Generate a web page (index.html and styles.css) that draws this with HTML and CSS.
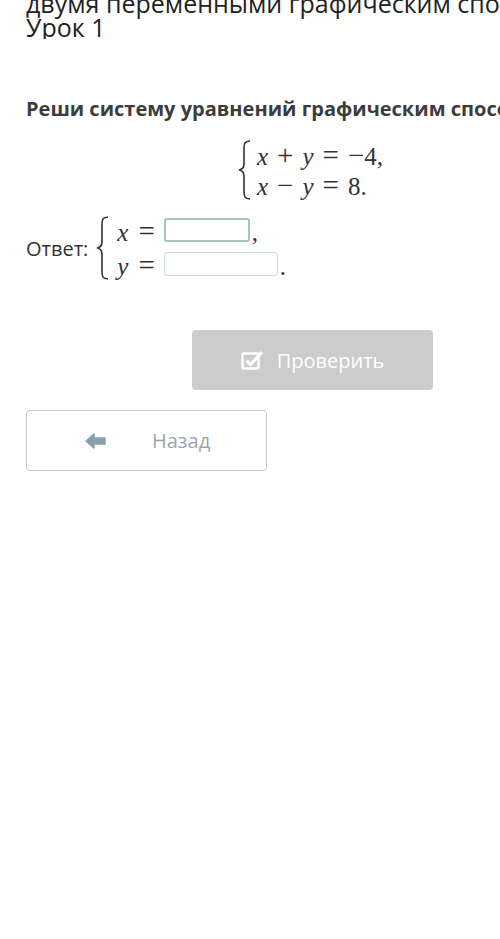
FILE: index.html
```html
<!DOCTYPE html>
<html lang="ru">
<head>
  <meta charset="UTF-8" />
  <meta name="viewport" content="width=device-width, initial-scale=1" />
  <title>Урок 1</title>
  <link rel="stylesheet" href="styles.css">
</head>
<body>

<header class="lesson-head">
  <h1>двумя переменными графическим способом.<br>Урок 1</h1>
</header>

<div class="task">
  <h2>Реши систему уравнений графическим способом:</h2>

  <div class="system">
    <svg class="brace" width="13" height="60" viewBox="0 0 13 60">
      <path d="M12 1 C7 1.5 6 3 6 8 L6 24 C6 28 4 29.5 1 30 C4 30.5 6 32 6 36 L6 52 C6 57 7 58.5 12 59" fill="none" stroke="#333" stroke-width="1.6"/>
    </svg>
    <div class="rows">
      <div class="eq"><i>x</i><span class="op">+</span><i>y</i><span class="op">=</span><span class="neg">−</span>4,</div>
      <div class="eq"><i>x</i><span class="op">−</span><i>y</i><span class="op">=</span>8.</div>
    </div>
  </div>

  <div class="answer">
    <span class="answer-label">Ответ:</span>
    <svg class="brace" width="13" height="64" viewBox="0 0 13 64">
      <path d="M12 1 C7 1.5 6 3 6 8 L6 26 C6 30 4 31.5 1 32 C4 32.5 6 34 6 38 L6 56 C6 61 7 62.5 12 63" fill="none" stroke="#333" stroke-width="1.6"/>
    </svg>
    <div class="rows">
      <div class="eq"><i>x</i><span class="op">=</span><input type="text" class="box box-x"><span class="punct">,</span></div>
      <div class="eq"><i>y</i><span class="op">=</span><input type="text" class="box box-y"><span class="punct">.</span></div>
    </div>
  </div>

  <div class="actions">
    <button type="button" class="btn-check" disabled>
      <svg width="24" height="22" viewBox="0 0 24 22">
        <rect x="1.5" y="4.5" width="16" height="15" rx="1.5" fill="none" stroke="#fff" stroke-width="2.5"/>
        <path d="M5.5 11.5 L9.5 15.5 L21 3" fill="none" stroke="#fff" stroke-width="3.2"/>
      </svg>
      Проверить
    </button>
  </div>

  <button type="button" class="btn-back">
    <svg width="22" height="16" viewBox="0 0 22 16">
      <path d="M1 8 L9 1 L9 5 L20 5 L20 11 L9 11 L9 15 Z" fill="#8aa0ad" stroke="#8aa0ad" stroke-width="1.5" stroke-linejoin="round"/>
    </svg>
    <span>Назад</span>
  </button>
</div>

</body>
</html>
```

FILE: styles.css
```css
body {
  font-family: "Open Sans", Arial, sans-serif;
  background-color: #fff;
  color: #333;
  margin: 0; padding: 0;
  overflow: hidden;
}
.lesson-head {
  padding: 0 26px;
  overflow: hidden;
}
.lesson-head h1 {
  margin: -9px 0 0;
  font-size: 25px;
  line-height: 24px;
  font-weight: normal;
  color: #222;
  white-space: nowrap;
}
.task {
  padding: 0 26px;
  overflow: hidden;
}
.task h2 {
  margin: 58px -26px 0 0;
  font-size: 20px;
  line-height: 24px;
  font-weight: bold;
  color: #3c3c3c;
  white-space: nowrap;
  overflow: hidden;
}
.system {
  display: flex;
  align-items: center;
  margin: 19px 0 0 212px;
  font-family: "Liberation Serif", "DejaVu Serif", serif;
  font-size: 25px;
  color: #333;
}
.brace {
  flex: none;
  margin-right: 6px;
}
.rows {
  display: flex;
  flex-direction: column;
}
.eq {
  height: 30px;
  line-height: 30px;
  white-space: nowrap;
}
.op {
  font-size: 29px;
  margin: 0 9px;
}
.neg {
  font-size: 29px;
}
.answer {
  display: flex;
  align-items: center;
  margin-top: 14px;
  font-family: "Liberation Serif", "DejaVu Serif", serif;
  font-size: 25px;
  color: #333;
}
.answer-label {
  font-family: "Open Sans", Arial, sans-serif;
  font-size: 20px;
  color: #333;
  margin-right: 8px;
}
.answer .brace {
  margin-right: 8px;
}
.answer .eq {
  height: 34px;
  line-height: 34px;
}
.answer .op {
  margin: 0 9px 0 10px;
}
.box {
  width: 86px;
  height: 24px;
  border: 1px solid #c9d6d6;
  border-radius: 3px;
  box-sizing: border-box;
  margin: 0 0 10px;
  padding: 0;
  background: white;
  vertical-align: middle;
}
.box-x {
  border: 2px solid #a9c3c3;
}
.box-y {
  width: 114px;
}
.punct {
  margin-left: 2px;
}
.actions {
  display: flex;
  justify-content: flex-end;
  margin-top: 48px;
  padding-right: 41px;
}
.btn-check {
  display: flex;
  align-items: center;
  justify-content: center;
  gap: 12px;
  width: 241px;
  height: 60px;
  background-color: #cccccc;
  color: white;
  border: none;
  border-radius: 4px;
  font-family: "Open Sans", Arial, sans-serif;
  font-size: 20px;
}
.btn-back {
  display: flex;
  align-items: center;
  width: 241px;
  height: 61px;
  margin-top: 20px;
  padding: 0 0 0 58px;
  background: white;
  border: 1px solid #c8c8c8;
  border-radius: 4px;
  font-family: "Open Sans", Arial, sans-serif;
  font-size: 20px;
  color: #9aa7ae;
}
.btn-back span {
  margin-left: 45px;
}
```
